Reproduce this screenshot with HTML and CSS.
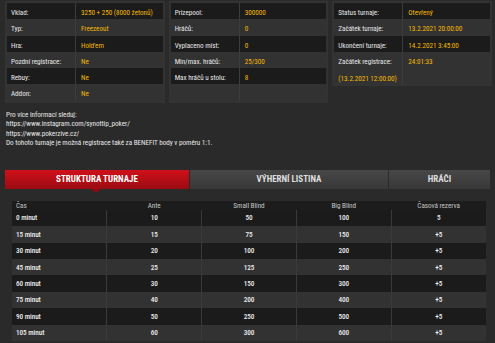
FILE: index.html
```html
<!DOCTYPE html>
<html lang="cs">
<head>
    <meta charset="UTF-8">
    <meta name="viewport" content="width=device-width, initial-scale=1.0">
    <title>Turnaj</title>
    <link rel="stylesheet" href="styles.css">
</head>
<body>
    <div class="info">
        <div class="panel">
            <div class="row"><span class="lbl">Vklad:</span><span class="val">3250 + 250 (8000 žetonů)</span></div>
            <div class="row"><span class="lbl">Typ:</span><span class="val">Freezeout</span></div>
            <div class="row"><span class="lbl">Hra:</span><span class="val">Hold'em</span></div>
            <div class="row"><span class="lbl">Pozdní registrace:</span><span class="val">Ne</span></div>
            <div class="row"><span class="lbl">Rebuy:</span><span class="val">Ne</span></div>
            <div class="row"><span class="lbl">Addon:</span><span class="val">Ne</span></div>
        </div>
        <div class="panel">
            <div class="row"><span class="lbl">Prizepool:</span><span class="val">300000</span></div>
            <div class="row"><span class="lbl">Hráčů:</span><span class="val">0</span></div>
            <div class="row"><span class="lbl">Vyplaceno míst:</span><span class="val">0</span></div>
            <div class="row"><span class="lbl">Min/max. hráčů:</span><span class="val">25/300</span></div>
            <div class="row"><span class="lbl">Max hráčů u stolu:</span><span class="val">8</span></div>
            <div class="row"><span class="lbl"></span><span class="val"></span></div>
        </div>
        <div class="panel">
            <div class="row"><span class="lbl">Status turnaje:</span><span class="val">Otevřený</span></div>
            <div class="row"><span class="lbl">Začátek turnaje:</span><span class="val">13.2.2021 20:00:00</span></div>
            <div class="row"><span class="lbl">Ukončení turnaje:</span><span class="val">14.2.2021 3:45:00</span></div>
            <div class="row tall"><span class="lbl">Začátek registrace:<em>(13.2.2021 12:00:00)</em></span><span class="val">24:01:33</span></div>
        </div>
    </div>

    <div class="note">
        Pro více informací sleduj:<br>
        https://www.instagram.com/synottip_poker/<br>
        https://www.pokerzive.cz/<br>
        Do tohoto turnaje je možná registrace také za BENEFIT body v poměru 1:1.
    </div>

    <div class="tabs">
        <div class="tab active">STRUKTURA TURNAJE</div>
        <div class="tab wide">VÝHERNÍ LISTINA</div>
        <div class="tab">HRÁČI</div>
    </div>

    <table class="levels">
        <thead>
            <tr><th>Čas</th><th>Ante</th><th>Small Blind</th><th>Big Blind</th><th>Časová rezerva</th></tr>
        </thead>
        <tbody>
            <tr><td>0 minut</td><td>10</td><td>50</td><td>100</td><td>5</td></tr>
            <tr><td>15 minut</td><td>15</td><td>75</td><td>150</td><td>+5</td></tr>
            <tr><td>30 minut</td><td>20</td><td>100</td><td>200</td><td>+5</td></tr>
            <tr><td>45 minut</td><td>25</td><td>125</td><td>250</td><td>+5</td></tr>
            <tr><td>60 minut</td><td>30</td><td>150</td><td>300</td><td>+5</td></tr>
            <tr><td>75 minut</td><td>40</td><td>200</td><td>400</td><td>+5</td></tr>
            <tr><td>90 minut</td><td>50</td><td>250</td><td>500</td><td>+5</td></tr>
            <tr><td>105 minut</td><td>60</td><td>300</td><td>600</td><td>+5</td></tr>
        </tbody>
    </table>
</body>
</html>
```

FILE: styles.css
```css
/* Tournament detail */
body {
    margin: 0;
    padding: 1px 3px 0 5px;
    background-color: #2a2a2a;
    color: #e6e6e6;
    font-family: "Roboto Condensed", Roboto, sans-serif;
    font-size: 7.2px;
    letter-spacing: -0.05px;
}
.info {
    display: grid;
    grid-template-columns: 1fr 1fr 1fr;
    gap: 4px;
    align-items: start;
}
.panel {
    background-color: #333;
    padding: 2px;
}
.row {
    display: flex;
    height: 16.3px;
    background-color: #323232;
}
.row:nth-child(odd) { background-color: #1b1b1b; }
.row.tall { height: 32.6px; }
.lbl {
    width: 64px;
    flex-shrink: 0;
    padding: 5px 0 0 4px;
    border-right: 1px solid #3c3c3c;
    white-space: nowrap;
}
.lbl em {
    display: block;
    font-style: normal;
    color: #f2b705;
    margin-top: 8px;
}
.val {
    padding: 5px 0 0 5px;
    color: #f2b705;
    white-space: nowrap;
}
.note {
    margin-top: 7px;
    line-height: 9.5px;
    padding-left: 1px;
}
.tabs {
    display: flex;
    margin-top: 22px;
    margin-right: 2px;
    height: 19px;
}
.tab {
    position: relative;
    width: 102px;
    display: flex;
    align-items: center;
    justify-content: center;
    font-weight: bold;
    font-size: 9px;
    letter-spacing: 0;
    color: #ddd;
    background: linear-gradient(#474747, #383838);
    border-left: 1px solid #2a2a2a;
    box-sizing: border-box;
}
.tab.wide { width: 199px; }
.tab.active {
    width: 184px;
    color: #fff;
    background: linear-gradient(#d0101a, #9a0b12);
    border-left: none;
}
.tab.active::after {
    content: "";
    position: absolute;
    left: 86px;
    bottom: -4px;
    border-left: 5px solid transparent;
    border-right: 5px solid transparent;
    border-top: 4px solid #8a0a10;
}
.levels {
    margin: 12px 0 0 7px;
    width: 474px;
    border-collapse: collapse;
    table-layout: fixed;
}
.levels th {
    height: 9px;
    background-color: #1c1c1c;
    color: #c4c4c4;
    font-weight: normal;
    padding: 0;
}
.levels td {
    height: 16.4px;
    padding: 0;
    text-align: center;
    font-weight: 500;
    color: #eee;
    border-left: 1px solid #3a3a3a;
}
.levels td:first-child, .levels th:first-child {
    text-align: left;
    padding-left: 4px;
    border-left: none;
}
.levels tbody tr:nth-child(odd) { background-color: #1b1b1b; }
.levels tbody tr:nth-child(even) { background-color: #323232; }
```
